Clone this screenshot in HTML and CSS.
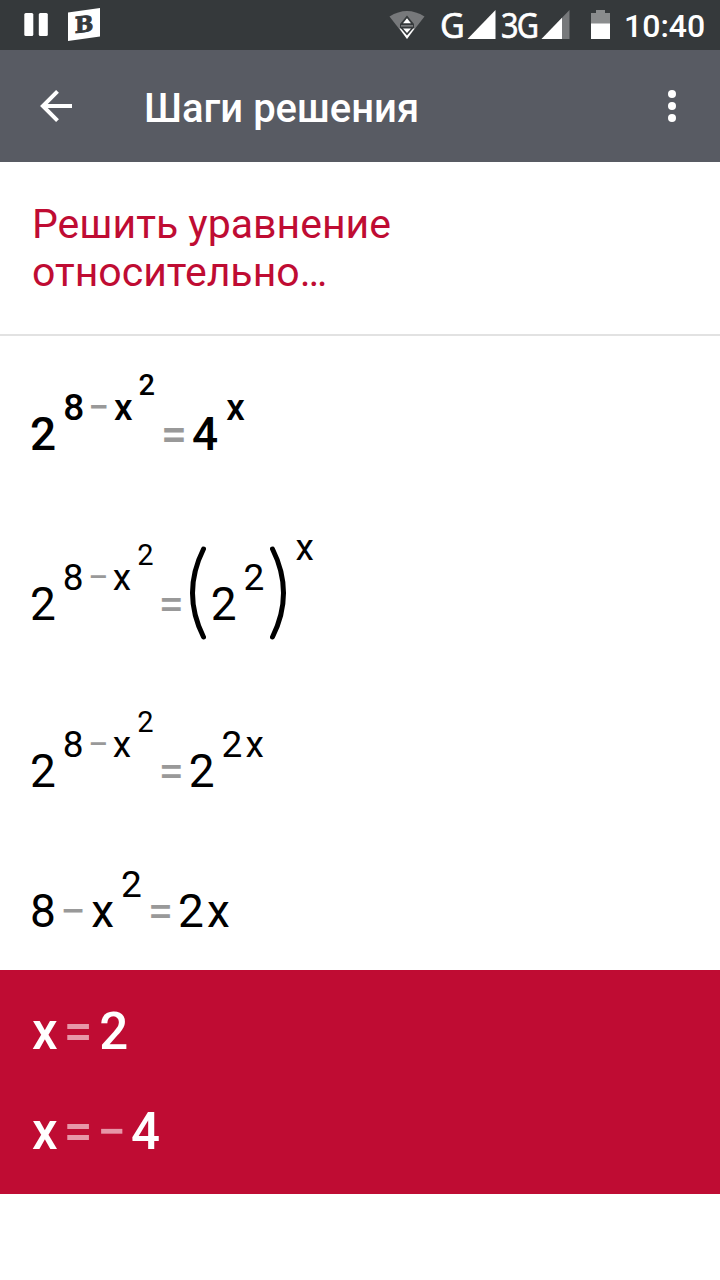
FILE: index.html
```
<!DOCTYPE html>
<html lang="ru">
<head>
    <meta charset="UTF-8">
    <meta name="viewport" content="width=device-width, initial-scale=1.0">
    <title>Шаги решения</title>
    <link rel="stylesheet" href="styles.css">
</head>
<body>
    <div class="status-bar">
        <svg class="pause" width="24" height="24" viewBox="0 0 24 24">
            <rect x="0.3" y="1" width="9" height="23" rx="1.5"/>
            <rect x="14.8" y="1" width="9" height="23" rx="1.5"/>
        </svg>
        <div class="logo"><span>B</span></div>
        <svg class="wifi" width="36" height="30" viewBox="0 0 36 30">
            <path d="M0.5 6.5Q18 -4.5 35.5 6.5L18 29z" fill="#77797b"/>
            <path d="M10.5 18.5h15L18 29z" fill="#fff"/>
            <path d="M18 5.5l7 8.5v3.500l-7 8-7-8V14z" fill="#35393b"/>
            <path d="M18 8.300l4 5h-8zM18 23l-4-4.500h8z" fill="#fff"/>
            <path d="M12 15h12v1.700H12z" fill="#77797b"/>
        </svg>
        <span class="net net-g">G</span>
        <svg class="signal" width="30" height="30" viewBox="0 0 30 30">
            <path d="M0.500 29L28.500 0v29z" fill="#fff"/>
        </svg>
        <span class="net net-3g">3G</span>
        <svg class="signal signal-2" width="30" height="30" viewBox="0 0 30 30">
            <path d="M0.500 29L28.500 0v29z" fill="#77797b"/>
            <path d="M0.500 29L21 7.800V29z" fill="#fff"/>
        </svg>
        <svg class="battery" width="19" height="29" viewBox="0 0 19 29">
            <path d="M0 3h5V0h9v3h5v11H0z" fill="#8a8c8d"/>
            <path d="M0 13.500h19V29H0z" fill="#fff"/>
        </svg>
        <span class="clock">10:40</span>
    </div>

    <div class="toolbar">
        <svg class="back" width="32" height="32" viewBox="0 0 32 32">
            <path d="M32 16H3M17.500 1.400L2.900 16l14.600 14.600" fill="none" stroke="#fff" stroke-width="4"/>
        </svg>
        <h1>Шаги решения</h1>
        <svg class="more" width="8" height="32" viewBox="0 0 8 32">
            <circle cx="4" cy="4" r="4"/>
            <circle cx="4" cy="16" r="4"/>
            <circle cx="4" cy="28" r="4"/>
        </svg>
    </div>

    <div class="task">Решить уравнение<br>относительно…</div>

    <div class="steps">
        <div class="step start"><span>2</span><span class="pow"><span>8</span><i class="minus">−</i><span class="var">x</span><span class="pow2">2</span></span><i class="eq">=</i><span class="rhs">4</span><span class="pow last">x</span></div>
        <div class="step group"><span>2</span><span class="pow"><span>8</span><i class="minus">−</i><span class="var">x</span><span class="pow2">2</span></span><i class="eq">=</i><svg class="paren" width="17" height="96" viewBox="0 0 17 96"><path d="M14.500 4Q-7.500 48 14.500 92"/></svg><span class="base">2</span><span class="pow">2</span><svg class="paren close" width="17" height="96" viewBox="0 0 17 96"><path d="M2.500 4Q24.500 48 2.500 92"/></svg><span class="pow high">x</span></div>
        <div class="step double"><span>2</span><span class="pow"><span>8</span><i class="minus">−</i><span class="var">x</span><span class="pow2">2</span></span><i class="eq">=</i><span class="rhs">2</span><span class="pow">2<span class="factor">x</span></span></div>
        <div class="step linear"><span>8</span><i class="minus">−</i><span class="var">x</span><span class="pow">2</span><i class="eq">=</i><span class="rhs">2</span><span class="factor">x</span></div>
    </div>

    <div class="answers">
        <div class="answer"><span>x</span><i class="eq">=</i><span class="value">2</span></div>
        <div class="answer"><span>x</span><i class="eq">=</i><i class="minus">−</i><span class="value">4</span></div>
    </div>
</body>
</html>
```
FILE: styles.css
```
* {
    box-sizing: border-box;
}
body {
    margin: 0;
    background: #fff;
    color: #000;
    font-family: Roboto, sans-serif;
}
i {
    font-style: normal;
}
svg {
    flex: none;
}
.status-bar {
    display: flex;
    align-items: flex-start;
    height: 50px;
    padding-left: 24px;
    background: #35393b;
    color: #fff;
    line-height: 50px;
}
.pause {
    margin-top: 12px;
    fill: #fff;
}
.logo {
    width: 32px;
    height: 33px;
    margin: 8px 0 0 20px;
    background: #fff;
    clip-path: polygon(0 14%, 100% 0, 100% 86%, 0 100%);
    text-align: center;
    line-height: 33px;
}
.logo span {
    display: block;
    color: #35393b;
    font-family: "DejaVu Serif", serif;
    font-weight: bold;
    font-size: 22px;
    -webkit-text-stroke: 1px #35393b;
    transform: skewY(-6deg);
}
.wifi {
    margin: 10px 0 0 289px;
}
.net {
    font-family: "Noto Sans", sans-serif;
    font-size: 34px;
    -webkit-text-stroke: .6px #fff;
    transform-origin: left center;
}
.net-g {
    width: 27px;
    margin-left: 15px;
}
.signal {
    margin-top: 10px;
}
.net-3g {
    width: 38px;
    margin-left: 4px;
    letter-spacing: -2px;
    transform: scaleX(.9);
}
.signal-2 {
    margin-left: 2px;
}
.battery {
    margin: 10px 0 0 20px;
}
.clock {
    margin: 1px 0 0 14px;
    font-size: 32px;
    font-weight: 500;
}
.toolbar {
    display: flex;
    align-items: center;
    height: 112px;
    padding: 0 44px 0 40px;
    background: #585b63;
    color: #fff;
}
.toolbar h1 {
    flex: 1;
    margin: 4px 0 0 72px;
    font-size: 40px;
    font-weight: 500;
}
.more {
    fill: #fff;
}
.task {
    height: 174px;
    padding: 38px 32px 0;
    border-bottom: 2px solid #e2e2e2;
    color: #bf0c33;
    font-size: 41px;
    line-height: 48px;
}
.steps {
    height: 634px;
    padding: 38px 0 0 30px;
}
.step {
    height: 120px;
    font-size: 46px;
    line-height: 120px;
    white-space: nowrap;
}
.start {
    font-weight: 500;
}
.group {
    margin-top: 50px;
}
.double {
    margin-top: 47px;
}
.linear {
    margin-top: 20px;
}
.eq,
.minus {
    color: #999;
}

/* powers are raised from the baseline, line-height 0 keeps the row height */
.pow {
    margin-left: 7px;
    font-size: 37px;
    line-height: 0;
    vertical-align: 30px;
}
.pow2 {
    margin-left: 6px;
    font-size: 29px;
    line-height: 0;
    vertical-align: 25px;
}
.minus {
    margin-left: 4px;
}
.var {
    margin-left: 4px;
}
.eq {
    margin-left: 5px;
}
.rhs {
    margin-left: 5px;
}
.factor {
    margin-left: 3px;
}
.start .var {
    margin-left: 5px;
}
.start .eq {
    margin-left: 6px;
}
.last {
    margin-left: 8px;
}
.paren {
    margin-left: 5px;
    vertical-align: -21px;
    fill: none;
    stroke: #000;
    stroke-width: 5;
    stroke-linecap: round;
}
.base {
    margin-left: 5px;
}
.close {
    margin-left: 6px;
}
.high {
    margin-left: 8px;
    vertical-align: 60px;
}
.linear .var {
    margin-left: 5px;
}
.linear .eq {
    margin-left: 6px;
}
.linear .rhs {
    margin-left: 5px;
}
.answers {
    height: 224px;
    padding: 12px 0 0 32px;
    background: #bf0c33;
    color: #fff;
}
.answer {
    height: 100px;
    font-size: 51px;
    font-weight: 500;
    line-height: 100px;
}
.answers .eq {
    margin-left: 6px;
    color: #e796a8;
}
.answers .minus {
    margin-left: 5px;
    color: #e796a8;
}
.value {
    margin-left: 7px;
}
.minus + .value {
    margin-left: 5px;
}
```
